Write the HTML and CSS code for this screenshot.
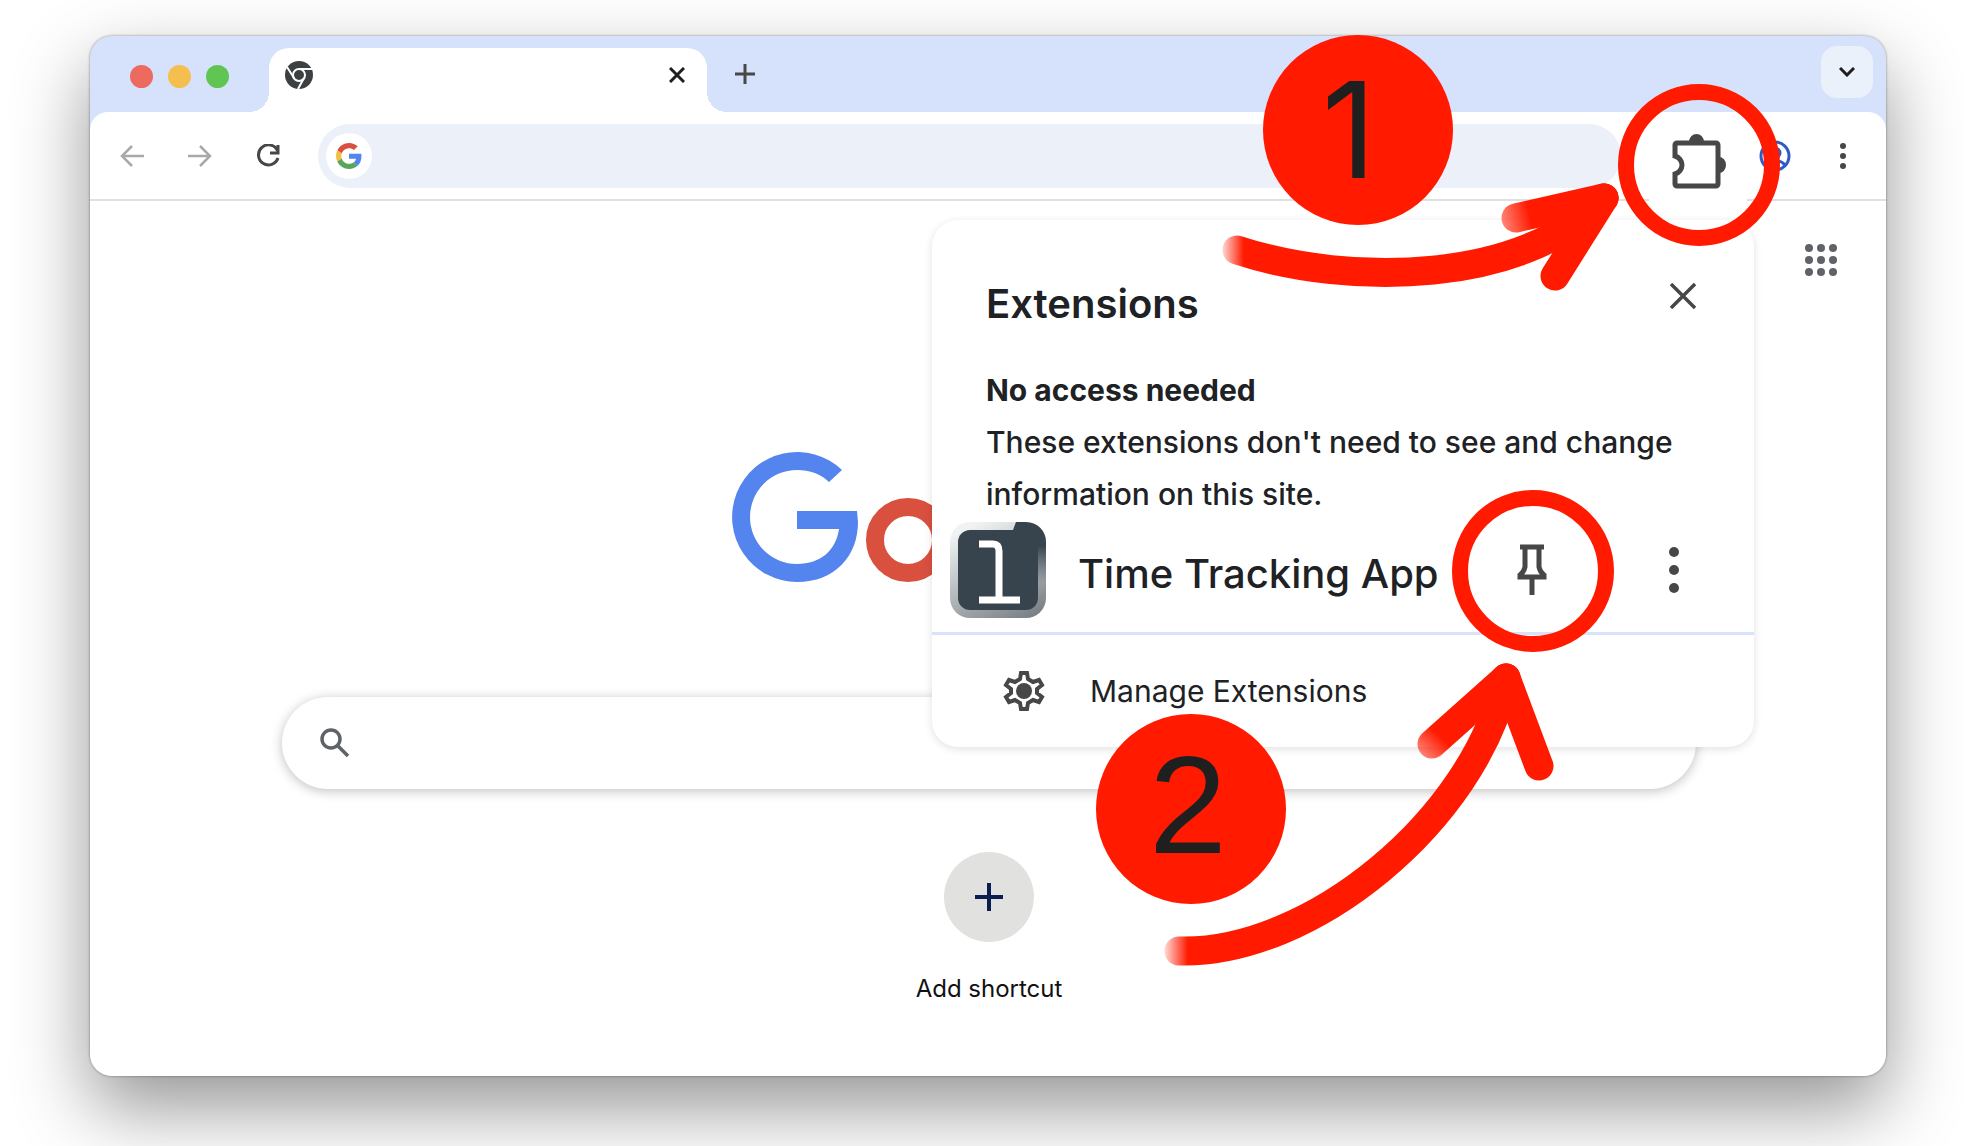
FILE: index.html
```
<!DOCTYPE html>
<html lang="en">
<head>
  <meta charset="UTF-8">
  <title>Pin the Time Tracking App extension</title>
  <link rel="stylesheet" href="styles.css">
</head>
<body>

<div class="window">
  <div class="tabstrip">
    <div class="lights">
      <span class="light red"></span>
      <span class="light yellow"></span>
      <span class="light green"></span>
    </div>
    <div class="tab">
      <svg width="28" height="28" viewBox="0 0 28 28">
        <circle cx="14" cy="14" r="14" fill="#3c4043"/>
        <g fill="none" stroke="#fff" stroke-width="2">
          <circle cx="14" cy="14" r="6"/>
          <path d="M14 8h13M9 17L2 6M19 17l-6 11"/>
        </g>
      </svg>
      <button class="icon-btn" aria-label="Close tab">
        <svg width="16" height="16" viewBox="0 0 16 16"><path d="M1 1l14 14M15 1L1 15" fill="none" stroke="#1f1f1f" stroke-width="3"/></svg>
      </button>
    </div>
    <button class="icon-btn new-tab" aria-label="New tab">
      <svg width="20" height="20" viewBox="0 0 20 20"><path d="M10 0v20M0 10h20" fill="none" stroke="#474747" stroke-width="3"/></svg>
    </button>
    <button class="tab-search" aria-label="Search tabs">
      <svg width="16" height="10" viewBox="0 0 16 10"><path d="M1 1l7 7 7-7" fill="none" stroke="#1f1f1f" stroke-width="3"/></svg>
    </button>
  </div>

  <div class="toolbar">
    <button class="icon-btn" aria-label="Back">
      <svg width="24" height="24" viewBox="0 0 24 24"><path d="M24 12H2M12 2L2 12l10 10" fill="none" stroke="#a9a9a9" stroke-width="2.5"/></svg>
    </button>
    <button class="icon-btn" aria-label="Forward">
      <svg width="24" height="24" viewBox="0 0 24 24"><path d="M0 12h22M12 2l10 10-10 10" fill="none" stroke="#a9a9a9" stroke-width="2.5"/></svg>
    </button>
    <button class="icon-btn" aria-label="Reload">
      <svg width="24" height="24" viewBox="0 0 24 24"><path d="M21.500 6.500A10 10 0 1 0 22 14M22 1v8h-8" fill="none" stroke="#474747" stroke-width="3"/></svg>
    </button>
    <div class="omnibox">
      <span class="site-icon">
        <svg width="26" height="26" viewBox="0 0 48 48">
          <path fill="#d9503f" d="M24 9.500c3.500 0 6.700 1.200 9.200 3.600l6.900-6.900C35.900 2.400 30.500 0 24 0 14.600 0 6.500 5.400 2.600 13.200l8 6.200C12.400 13.700 17.700 9.500 24 9.500z"/>
          <path fill="#5484ed" d="M47 24.500c0-1.600-.2-3.100-.4-4.500H24v9h12.900c-.6 3-2.300 5.500-4.800 7.200l7.700 6C44.400 38 47 31.800 47 24.500z"/>
          <path fill="#f3be42" d="M10.500 28.600c-.5-1.500-.8-3-.8-4.600s.3-3.100.8-4.600l-8-6.200C.9 16.500 0 20.100 0 24s.9 7.500 2.600 10.800z"/>
          <path fill="#58a55c" d="M24 48c6.500 0 11.900-2.100 15.900-5.800l-7.700-6c-2.200 1.500-4.900 2.300-8.200 2.300-6.300 0-11.600-4.200-13.500-9.900l-8 6.200C6.500 42.600 14.600 48 24 48z"/>
        </svg>
      </span>
      <input type="text" class="address" aria-label="Address">
    </div>
    <button class="icon-btn extensions-btn" aria-label="Extensions">
      <svg width="64" height="72" viewBox="0 0 64 72">
        <path d="M11 21h39a2 2 0 0 1 2 2v39a2 2 0 0 1-2 2H11a2 2 0 0 1-2-2V52c4-1 7-5 7-9s-3-8-7-9V23a2 2 0 0 1 2-2z" fill="none" stroke="#474747" stroke-width="5"/>
        <path d="M23 20a7.500 8 0 0 1 15 0zM53 35a7 8 0 0 1 0 16z" fill="#474747"/>
      </svg>
    </button>
    <button class="icon-btn profile-btn" aria-label="Profile">
      <svg width="32" height="32" viewBox="0 0 32 32"><g fill="none" stroke="#2f5bc7" stroke-width="3"><circle cx="16" cy="16" r="14"/><circle cx="16" cy="13" r="5"/><path d="M6 25c5-6 15-6 20 0"/></g></svg>
    </button>
    <button class="icon-btn" aria-label="Menu">
      <svg width="8" height="28" viewBox="0 0 8 28" fill="#474747"><circle cx="4" cy="4" r="3"/><circle cx="4" cy="14" r="3"/><circle cx="4" cy="24" r="3"/></svg>
    </button>
  </div>

  <div class="page">
    <button class="icon-btn apps" aria-label="Google apps">
      <svg width="32" height="32" viewBox="0 0 32 32" fill="#5f6368">
        <circle cx="4" cy="4" r="4"/><circle cx="16" cy="4" r="4"/><circle cx="28" cy="4" r="4"/>
        <circle cx="4" cy="16" r="4"/><circle cx="16" cy="16" r="4"/><circle cx="28" cy="16" r="4"/>
        <circle cx="4" cy="28" r="4"/><circle cx="16" cy="28" r="4"/><circle cx="28" cy="28" r="4"/>
      </svg>
    </button>
    <svg class="logo" width="516" height="130" viewBox="0 0 516 130" role="img" aria-label="Google">
      <path fill="#5484ed" d="M111 18A65 65 0 1 0 66 130C104 130 127 104 127 70L126 59H66V77H108C105 98 90 112 66 112A47 47 0 0 1 66 18C79 18 90 22 98 30Z"/>
      <circle cx="177" cy="88" r="33" fill="none" stroke="#d9503f" stroke-width="18"/>
    </svg>
    <div class="search">
      <svg width="30" height="30" viewBox="0 0 30 30"><g fill="none" stroke="#5f6368" stroke-width="3.500"><circle cx="11" cy="11" r="9"/><path d="M17 17l11 11"/></g></svg>
      <input type="text" class="query" aria-label="Search">
    </div>
    <button class="shortcut">
      <span class="shortcut-icon">
        <svg width="28" height="28" viewBox="0 0 28 28"><path d="M14 0v28M0 14h28" fill="none" stroke="#0b1d51" stroke-width="4"/></svg>
      </span>
      Add shortcut
    </button>
  </div>

  <div class="popup">
    <div class="popup-head">
      <h1>Extensions</h1>
      <button class="icon-btn" aria-label="Close">
        <svg width="26" height="26" viewBox="0 0 26 26"><path d="M1 1l24 24M25 1L1 25" fill="none" stroke="#474747" stroke-width="3.500"/></svg>
      </button>
    </div>
    <div class="popup-info">
      <h2>No access needed</h2>
      <p>These extensions don't need to see and change information on this site.</p>
    </div>
    <div class="extension">
      <svg width="96" height="96" viewBox="0 0 96 96">
        <defs>
          <linearGradient id="frame" x1="0.300" y1="0" x2="0.800" y2="1">
            <stop offset="0" stop-color="#f1f3f3"/>
            <stop offset="1" stop-color="#7b8287"/>
          </linearGradient>
          <linearGradient id="corner" x1="0" y1="0" x2="0" y2="1">
            <stop offset="0.400" stop-color="#38444d"/>
            <stop offset="1" stop-color="#38444d" stop-opacity="0"/>
          </linearGradient>
        </defs>
        <rect width="96" height="96" rx="20" fill="url(#frame)"/>
        <path d="M66 0h10a20 20 0 0 1 20 20v40H80V20H63V8z" fill="url(#corner)"/>
        <rect x="8" y="8" width="80" height="80" rx="12" fill="#38444d"/>
        <path d="M29 22h14q6 0 6 7v49M29 78h41" fill="none" stroke="#fff" stroke-width="7"/>
      </svg>
      <span class="extension-name">Time Tracking App</span>
      <button class="icon-btn pin-btn" aria-label="Pin">
        <svg width="34" height="52" viewBox="0 0 34 52">
          <path d="M5 3h24M10 3v20q-1 5-5 8v2h24v-2q-4-3-5-8V3M17 33v18" fill="none" stroke="#474747" stroke-width="5"/>
        </svg>
      </button>
      <button class="icon-btn more-btn" aria-label="More">
        <svg width="12" height="48" viewBox="0 0 12 48" fill="#474747"><circle cx="6" cy="6" r="5"/><circle cx="6" cy="24" r="5"/><circle cx="6" cy="42" r="5"/></svg>
      </button>
    </div>
    <button class="manage">
      <svg width="44" height="44" viewBox="0 0 44 44">
        <path d="M19 4h6l1 6 5 3 6-2 3 5-5 4v4l5 4-3 5-6-2-5 3-1 6h-6l-1-6-5-3-6 2-3-5 5-4v-4l-5-4 3-5 6 2 5-3z" fill="none" stroke="#474747" stroke-width="4"/>
        <circle cx="22" cy="22" r="8" fill="#474747"/>
      </svg>
      Manage Extensions
    </button>
  </div>

  <!-- step markers drawn over the window -->
  <svg class="steps" width="820" height="1000" viewBox="1066 36 820 1000">
    <defs>
      <linearGradient id="fade1" gradientUnits="userSpaceOnUse" x1="1218" y1="0" x2="1244" y2="0">
        <stop offset="0" stop-color="#ff1a00" stop-opacity="0"/>
        <stop offset="1" stop-color="#ff1a00"/>
      </linearGradient>
      <linearGradient id="fade2" gradientUnits="userSpaceOnUse" x1="1160" y1="0" x2="1188" y2="0">
        <stop offset="0" stop-color="#ff1a00" stop-opacity="0"/>
        <stop offset="1" stop-color="#ff1a00"/>
      </linearGradient>
      <linearGradient id="fade3" gradientUnits="userSpaceOnUse" x1="1500" y1="222" x2="1530" y2="215">
        <stop offset="0" stop-color="#ff1a00" stop-opacity="0.500"/>
        <stop offset="1" stop-color="#ff1a00"/>
      </linearGradient>
      <linearGradient id="fade4" gradientUnits="userSpaceOnUse" x1="1418" y1="762" x2="1442" y2="738">
        <stop offset="0" stop-color="#ff1a00" stop-opacity="0.400"/>
        <stop offset="1" stop-color="#ff1a00"/>
      </linearGradient>
    </defs>
    <circle cx="1358" cy="130" r="95" fill="#ff1a00"/>
    <circle cx="1191" cy="809" r="95" fill="#ff1a00"/>
    <circle cx="1699" cy="165" r="73" fill="none" stroke="#ff1a00" stroke-width="16"/>
    <circle cx="1533" cy="571" r="73" fill="none" stroke="#ff1a00" stroke-width="16"/>
    <g fill="none" stroke-width="29" stroke-linecap="round">
      <path d="M1237 250C1350 287 1525 284 1604 198" stroke="url(#fade1)"/>
      <path d="M1604 198L1516 218" stroke="url(#fade3)"/>
      <path d="M1604 198L1555 276" stroke="#ff1a00"/>
      <path d="M1179 951C1310 955 1475 820 1506 678" stroke="url(#fade2)"/>
      <path d="M1506 678L1432 744" stroke="url(#fade4)"/>
      <path d="M1506 678L1539 766" stroke="#ff1a00"/>
    </g>
    <text class="step one" x="1349" y="178">1</text>
    <text class="step" x="1188" y="853">2</text>
  </svg>
</div>

</body>
</html>
```

FILE: styles.css
```
* { box-sizing: border-box; }
body {
  margin: 0;
  padding: 36px 78px 70px 90px;
  background-color: #fff;
  color: #202124;
  font-family: Inter, 'Liberation Sans', sans-serif;
  overflow: hidden;
}
button {
  border: none;
  background: none;
  padding: 0;
  color: inherit;
  font-family: inherit;
  cursor: pointer;
}
input {
  flex: 1;
  min-width: 0;
  border: none;
  outline: none;
  background: none;
  font-family: inherit;
}
svg { display: block; }
.window {
  position: relative;
  min-height: calc(100vh - 106px);
  border-radius: 22px;
  background-color: #d6e1fb;
  box-shadow: 0 0 2px 1px rgba(0, 0, 0, 0.2), 0 32px 76px rgba(0, 0, 0, 0.42);
  display: flex;
  flex-direction: column;
}
.tabstrip {
  display: flex;
  align-items: flex-end;
  height: 76px;
  padding: 0 13px 0 40px;
}
.lights {
  display: flex;
  gap: 15px;
  height: 72px;
  align-items: center;
}
.light {
  width: 23px;
  height: 23px;
  border-radius: 50%;
}
.red { background-color: #ec6a5e; }
.yellow { background-color: #f4bf4f; }
.green { background-color: #61c554; }
.tab {
  position: relative;
  display: flex;
  align-items: center;
  justify-content: space-between;
  width: 438px;
  height: 64px;
  margin-left: 40px;
  padding: 0 22px 10px 16px;
  border-radius: 20px 20px 0 0;
  background-color: #fff;
}
.tab::before, .tab::after {
  content: "";
  position: absolute;
  bottom: 0;
  width: 20px;
  height: 20px;
}
.tab::before {
  left: -20px;
  background: radial-gradient(circle at 0 0, transparent 20px, #fff 20px);
}
.tab::after {
  right: -20px;
  background: radial-gradient(circle at 100% 0, transparent 20px, #fff 20px);
}
.icon-btn {
  flex: none;
  display: flex;
  align-items: center;
  justify-content: center;
}
.new-tab {
  height: 76px;
  margin-left: 28px;
}
.tab-search {
  display: flex;
  align-items: center;
  justify-content: center;
  width: 52px;
  height: 52px;
  margin: 0 0 14px auto;
  border-radius: 16px;
  background-color: #ebf1fb;
}
.toolbar {
  display: flex;
  align-items: center;
  gap: 44px;
  height: 89px;
  padding: 0 39px 0 30px;
  border-bottom: 2px solid #e0e0e0;
  border-radius: 18px 18px 0 0;
  background-color: #fff;
}
.omnibox {
  flex: 1;
  display: flex;
  align-items: center;
  height: 64px;
  margin-left: -6px;
  padding: 0 8px;
  border-radius: 32px;
  background-color: #ebf0f9;
}
.site-icon {
  display: flex;
  align-items: center;
  justify-content: center;
  width: 46px;
  height: 46px;
  border-radius: 50%;
  background-color: #fff;
}
.address {
  padding: 0 16px;
  font-size: 24px;
}
.extensions-btn {
  align-self: stretch;
  width: 98px;
  margin: 0 -16px -4px;
  background-color: #fff;
}
.profile-btn { margin: 0 4px 0 -16px; }
.page {
  flex: 1;
  display: flex;
  flex-direction: column;
  align-items: center;
  padding: 43px 190px 60px 192px;
  border-radius: 0 0 22px 22px;
  background-color: #fff;
}
.apps {
  align-self: flex-end;
  margin-right: -141px;
}
.logo { margin-top: 176px; }
.search {
  display: flex;
  align-items: center;
  align-self: stretch;
  height: 92px;
  margin-top: 115px;
  padding: 0 38px;
  border-radius: 46px;
  box-shadow: 0 2px 12px rgba(0, 0, 0, 0.25);
}
.query {
  padding: 0 24px;
  font-size: 24px;
}
.shortcut {
  display: flex;
  flex-direction: column;
  align-items: center;
  gap: 32px;
  margin-top: 63px;
  color: #111;
  font-size: 24px;
  line-height: 30px;
}
.shortcut-icon {
  display: flex;
  align-items: center;
  justify-content: center;
  width: 90px;
  height: 90px;
  border-radius: 50%;
  background-color: #e1e1df;
}
.popup {
  position: absolute;
  top: 184px;
  right: 132px;
  width: 822px;
  padding-top: 60px;
  border-radius: 26px;
  background-color: #fff;
  box-shadow: 0 2px 8px rgba(0, 0, 0, 0.12);
}
.popup-head {
  display: flex;
  justify-content: space-between;
  padding: 0 58px 0 54px;
}
h1, h2, p { margin: 0; }
h1 {
  font-size: 40px;
  font-weight: 600;
  line-height: 48px;
}
.popup-head .icon-btn { height: 32px; }
.popup-info {
  margin-top: 36px;
  padding: 0 54px;
  font-size: 30px;
  font-weight: 500;
  line-height: 52px;
}
h2 {
  font-size: inherit;
  font-weight: 700;
}
.extension {
  display: flex;
  align-items: center;
  padding: 2px 60px 14px 18px;
  border-bottom: 3px solid #d8e2fb;
}
.extension-name {
  margin: 8px auto 0 32px;
  font-size: 40px;
  font-weight: 500;
  line-height: 48px;
}
.pin-btn, .more-btn { width: 40px; }
.more-btn { margin-left: 102px; }
.manage {
  display: flex;
  align-items: center;
  gap: 44px;
  width: 100%;
  height: 112px;
  padding: 0 70px;
  font-size: 30px;
}
.steps {
  position: absolute;
  top: 0;
  right: 0;
  overflow: visible;
  pointer-events: none;
}
.step {
  fill: #1f1f1f;
  font-family: 'Liberation Sans', sans-serif;
  font-size: 140px;
  text-anchor: middle;
}
.one {
  font-family: Inter, sans-serif;
  font-size: 134px;
}
```
